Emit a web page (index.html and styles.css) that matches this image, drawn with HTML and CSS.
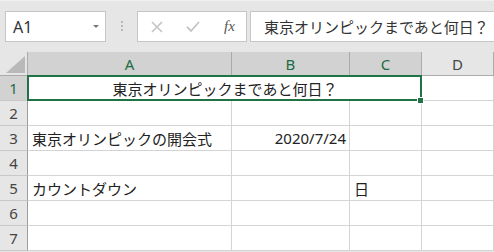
FILE: index.html
```html
<!DOCTYPE html>
<html lang="ja">
<head>
  <meta charset="UTF-8">
  <title>東京オリンピックまであと何日？</title>
  <link rel="stylesheet" href="styles.css">
</head>
<body>
  <div class="toolbar">
    <div class="namebox">
      <span>A1</span>
      <span class="caret"></span>
    </div>
    <div class="grip"><i></i><i></i><i></i></div>
    <div class="fx-buttons">
      <svg class="btn-icon" width="14" height="14" viewBox="0 0 14 14">
        <path d="M2 2 L12 12 M12 2 L2 12" stroke="#c4c4c4" stroke-width="1.6" fill="none"/>
      </svg>
      <svg class="btn-icon" width="14" height="12" viewBox="0 0 14 12">
        <path d="M1 6 L5 10 L13 1" stroke="#c4c4c4" stroke-width="1.8" fill="none"/>
      </svg>
      <span class="fx">fx</span>
    </div>
    <div class="formula">東京オリンピックまであと何日？</div>
  </div>

  <div class="sheet">
    <div class="corner">
      <svg width="19" height="17" viewBox="0 0 19 17"><polygon points="19,0 19,17 0,17" fill="#b9b9b9"/></svg>
    </div>
    <div class="col-head selected">A</div>
    <div class="col-head selected">B</div>
    <div class="col-head selected">C</div>
    <div class="col-head">D</div>

    <div class="row-head selected">1</div>
    <div class="cell merged">東京オリンピックまであと何日？<span class="handle"></span></div>
    <div class="cell"></div>

    <div class="row-head">2</div>
    <div class="cell"></div><div class="cell"></div><div class="cell"></div><div class="cell"></div>

    <div class="row-head">3</div>
    <div class="cell">東京オリンピックの開会式</div>
    <div class="cell num">2020/7/24</div>
    <div class="cell"></div><div class="cell"></div>

    <div class="row-head">4</div>
    <div class="cell"></div><div class="cell"></div><div class="cell"></div><div class="cell"></div>

    <div class="row-head">5</div>
    <div class="cell">カウントダウン</div>
    <div class="cell"></div>
    <div class="cell">日</div>
    <div class="cell"></div>

    <div class="row-head">6</div>
    <div class="cell"></div><div class="cell"></div><div class="cell"></div><div class="cell"></div>

    <div class="row-head">7</div>
    <div class="cell"></div><div class="cell"></div><div class="cell"></div><div class="cell"></div>
  </div>
</body>
</html>
```

FILE: styles.css
```css
body {
  margin: 0;
  background: #e6e6e6;
  font-family: "Noto Sans CJK JP", "Noto Sans", sans-serif;
  font-size: 15px;
  color: #222;
}
.toolbar {
  height: 52px;
  box-sizing: border-box;
  padding: 11px 0 0 5px;
  display: flex;
  align-items: flex-start;
  border-top: 1px solid #f0f0f0;
  overflow: hidden;
}
.namebox {
  width: 101px;
  height: 31px;
  box-sizing: border-box;
  margin-top: -1px;
  background: white;
  border: 1px solid #c6c6c6;
  display: flex;
  align-items: center;
  justify-content: space-between;
  padding: 0 6px 0 7px;
  font-family: "Noto Sans", sans-serif;
  font-size: 16px;
  color: #333;
}
.caret {
  width: 0;
  height: 0;
  border-left: 3px solid transparent;
  border-right: 3px solid transparent;
  border-top: 3px solid #777;
}
.grip {
  display: flex;
  flex-direction: column;
  gap: 2px;
  margin: 9px 14px 0 15px;
}
.grip i {
  width: 2px;
  height: 2px;
  background: #b8b8b8;
}
.fx-buttons {
  width: 110px;
  height: 31px;
  box-sizing: border-box;
  margin-top: -1px;
  background: white;
  border: 1px solid #c6c6c6;
  display: flex;
  align-items: center;
  padding: 0 0 0 12px;
  gap: 22px;
}
.fx {
  font-family: "Liberation Serif", serif;
  font-style: italic;
  font-size: 15px;
  color: #555;
  margin-left: 2px;
}
.formula {
  flex: 1;
  height: 31px;
  box-sizing: border-box;
  margin: -1px -2px 0 3px;
  background: white;
  border: 1px solid #c6c6c6;
  padding: 0 0 0 13px;
  line-height: 29px;
  color: #333;
  white-space: nowrap;
}
.sheet {
  display: grid;
  grid-template-columns: 28px 204px 118px 72px 72px;
  grid-template-rows: 24px repeat(7, 25px);
  background: white;
}
.corner {
  background: #e6e6e6;
  border-right: 1px solid #ababab;
  border-bottom: 1px solid #ababab;
  display: flex;
  align-items: flex-end;
  justify-content: flex-end;
  padding: 0 2px 2px 0;
}
.col-head {
  background: #e6e6e6;
  border-right: 1px solid #ababab;
  border-bottom: 1px solid #ababab;
  display: flex;
  align-items: center;
  justify-content: center;
  font-family: "Noto Sans", sans-serif;
  color: #444;
}
.row-head {
  background: #e6e6e6;
  border-right: 1px solid #9e9e9e;
  border-bottom: 1px solid #c8c8c8;
  display: flex;
  align-items: center;
  justify-content: center;
  font-family: "Noto Sans", sans-serif;
  color: #444;
}
.col-head.selected,
.row-head.selected {
  background: #d2d2d2;
  color: #1f6b42;
}
.cell {
  border-right: 1px solid #d4d4d4;
  border-bottom: 1px solid #d4d4d4;
  display: flex;
  align-items: center;
  padding: 0 3px 0 4px;
  white-space: nowrap;
}
.cell.num {
  justify-content: flex-end;
  font-family: "Noto Sans", sans-serif;
}
.cell.merged {
  grid-column: span 3;
  justify-content: center;
  position: relative;
}
.cell.merged::after {
  content: "";
  position: absolute;
  top: -1px;
  left: -1px;
  right: -1px;
  bottom: -1px;
  border: 2px solid #217346;
}
.handle {
  position: absolute;
  right: -3px;
  bottom: -4px;
  width: 5px;
  height: 5px;
  background: #217346;
  border: 1px solid white;
  z-index: 1;
}
```
